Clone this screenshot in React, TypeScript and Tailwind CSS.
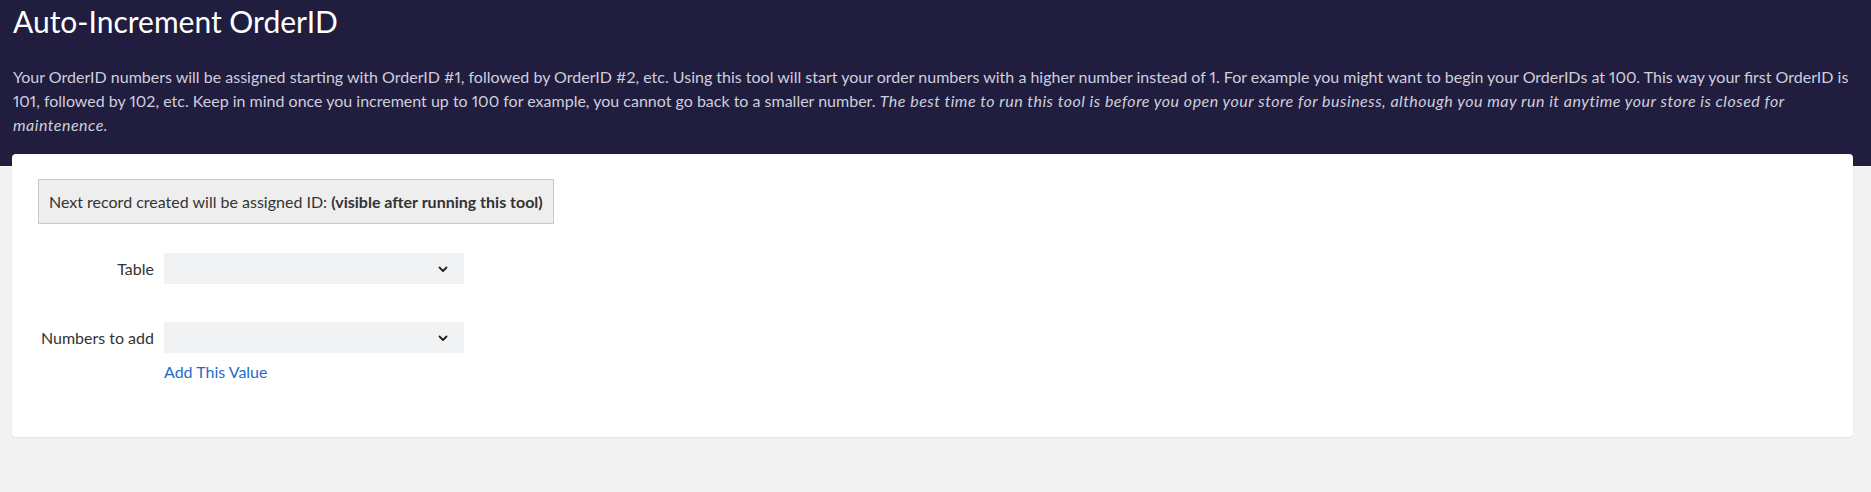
import React from "react";

function Chevron() {
  return (
    <svg width="12" height="12" viewBox="0 0 12 12" fill="none" className="absolute right-[15px] top-1/2 -translate-y-1/2">
      <path d="M2.5 4.5 L6 8 L9.5 4.5" stroke="#222" strokeWidth="1.8" strokeLinecap="round" strokeLinejoin="round" />
    </svg>
  );
}

function SelectBox() {
  return (
    <div className="relative w-[300px] h-[31px] bg-[#f1f2f4]">
      <Chevron />
    </div>
  );
}

export default function App() {
  return (
    <div className="min-h-[492px] bg-[#f3f3f3] font-['Lato',sans-serif] proportional-nums">
      <div className="bg-[#201d3f] pl-[13px] pr-[18px] pt-[1px] pb-[29px]">
        <h1 className="text-[30px] leading-[40px] text-white">Auto-Increment OrderID</h1>
        <p className="mt-[24px] text-[16px] leading-[24px] text-[#cfcfdc]">
          Your OrderID numbers will be assigned starting with OrderID #1, followed by OrderID #2, etc. Using this tool will start your order numbers with a higher number instead of 1. For example you might want to begin your OrderIDs at 100. This way your first OrderID is 101, followed by 102, etc. Keep in mind once you increment up to 100 for example, you cannot go back to a smaller number.{" "}
          <i className="tracking-[0.5px]">The best time to run this tool is before you open your store for business, although you may run it anytime your store is closed for maintenence.</i>
        </p>
      </div>
      <div className="ml-[12px] mr-[18px] -mt-[12px] relative bg-white rounded-[4px] shadow-[0_1px_2px_rgba(0,0,0,0.08)] pl-[26px] pt-[25px] pb-[53px] text-[#333]">
        <div className="inline-flex items-center h-[45px] px-[10px] bg-[#eeeeee] border border-[#c8c8c8] text-[16px]">
          <span>
            Next record created will be assigned ID: <b className="font-bold">(visible after running this tool)</b>
          </span>
        </div>
        <div className="mt-[29px] flex items-center">
          <div className="w-[126px] text-right text-[16px] pr-[10px] whitespace-nowrap">Table</div>
          <SelectBox />
        </div>
        <div className="mt-[38px] flex items-center">
          <div className="w-[126px] text-right text-[16px] pr-[10px] whitespace-nowrap">Numbers to add</div>
          <SelectBox />
        </div>
        <div className="pl-[126px] mt-[7px] text-[16px] leading-[24px]">
          <a className="text-[#1f6bc8] cursor-pointer">Add This Value</a>
        </div>
      </div>
    </div>
  );
}
